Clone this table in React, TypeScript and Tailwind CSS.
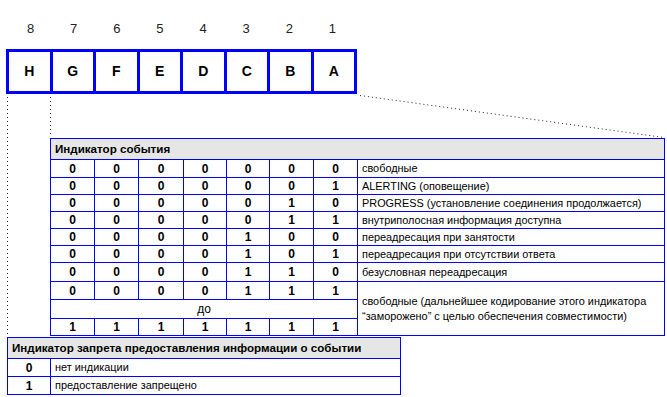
import React from 'react';

const bitsTop = ['8', '7', '6', '5', '4', '3', '2', '1'];
const letters = ['H', 'G', 'F', 'E', 'D', 'C', 'B', 'A'];

const rows: { bits: string; text: string; h: string }[] = [
  { bits: '0000000', text: 'свободные', h: 'h-[18px]' },
  { bits: '0000001', text: 'ALERTING (оповещение)', h: 'h-[17px]' },
  { bits: '0000010', text: 'PROGRESS (установление соединения продолжается)', h: 'h-[17px]' },
  { bits: '0000011', text: 'внутриполосная информация доступна', h: 'h-[17px]' },
  { bits: '0000100', text: 'переадресация при занятости', h: 'h-[17px]' },
  { bits: '0000101', text: 'переадресация при отсутствии ответа', h: 'h-[17px]' },
  { bits: '0000110', text: 'безусловная переадресация', h: 'h-[19px]' },
];

const cell = 'border-r border-b border-[#0000ff] flex items-center justify-center font-bold text-[12px]';
const desc = 'border-r border-b border-[#0000ff] flex items-center pl-[4px] text-[10.9px] text-black whitespace-nowrap';
const head = 'bg-[#e6e6e6] border-r border-b border-[#0000ff] flex items-center pl-[4px] font-bold text-[11.6px] whitespace-nowrap';

const BitCells: React.FC<{ bits: string; h: string }> = ({ bits, h }) => (
  <>
    {bits.split('').map((b, i) => (
      <div key={i} className={`${cell} ${h}`}>
        {b}
      </div>
    ))}
  </>
);

export default function App() {
  return (
    <div className="relative w-[667px] h-[397px] bg-white overflow-hidden font-['Liberation_Sans',Arial,sans-serif] text-black">
      {/* bit numbers */}
      <div className="ml-[6px] pt-[20px] w-[351px] flex px-[3px]">
        {bitsTop.map((n) => (
          <div key={n} className="flex-1 h-[17px] flex items-center justify-center text-[13px] text-[#222]">
            {n}
          </div>
        ))}
      </div>

      {/* octet boxes */}
      <div className="ml-[6px] mt-[12px] w-[351px] h-[45px] border-[3px] border-[#0000ff] flex">
        {letters.map((l, i) => (
          <div
            key={l}
            className={`flex-1 flex items-center justify-center font-bold text-[14px] ${i > 0 ? 'border-l-[3px] border-[#0000ff]' : ''}`}
          >
            {l}
          </div>
        ))}
      </div>

      {/* event indicator table */}
      <div className="ml-[50px] mt-[44px] w-[615px] border-t border-l border-[#0000ff] grid grid-cols-[44px_44px_45px_43px_43px_44px_44px_307px]">
        <div className={`col-span-8 h-[21px] ${head}`}>Индикатор события</div>
        {rows.map((r) => (
          <React.Fragment key={r.bits}>
            <BitCells bits={r.bits} h={r.h} />
            <div className={`${desc} ${r.h}`}>{r.text}</div>
          </React.Fragment>
        ))}
        <BitCells bits="0000111" h="h-[18px]" />
        <div className="row-span-3 border-r border-b border-[#0000ff] flex items-center pl-[4px] text-[10.9px] leading-[15px]">
          свободные (дальнейшее кодирование этого индикатора
          <br />
          “заморожено” с целью обеспечения совместимости)
        </div>
        <div className="col-span-7 h-[19px] border-r border-b border-[#0000ff] flex items-center justify-center text-[12px]">
          до
        </div>
        <BitCells bits="1111111" h="h-[17px]" />
      </div>

      {/* presentation restriction indicator */}
      <div className="ml-[7px] mt-[1px] w-[394px] border-t border-l border-[#0000ff] grid grid-cols-[43px_350px]">
        <div className={`col-span-2 h-[21px] ${head}`}>Индикатор запрета предоставления информации о событии</div>
        <div className={`${cell} h-[18px]`}>0</div>
        <div className={`${desc} h-[18px]`}>нет индикации</div>
        <div className={`${cell} h-[18px]`}>1</div>
        <div className={`${desc} h-[18px]`}>предоставление запрещено</div>
      </div>

      {/* dotted leader lines */}
      <svg className="absolute inset-0 pointer-events-none" width="667" height="397">
        <g stroke="#222" strokeWidth="1" strokeDasharray="1 3" fill="none">
          <line x1="7.5" y1="97" x2="7.5" y2="337" />
          <line x1="50.5" y1="97" x2="50.5" y2="137" />
          <line x1="360" y1="95.5" x2="664" y2="137.5" />
        </g>
      </svg>
    </div>
  );
}
